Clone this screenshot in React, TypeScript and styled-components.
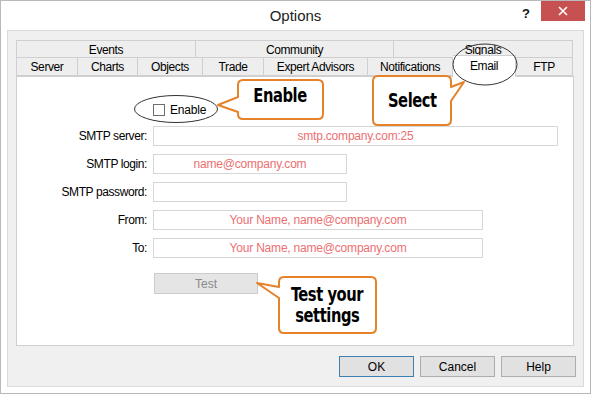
import React from 'react';
import styled, { createGlobalStyle } from 'styled-components';

const GlobalStyle = createGlobalStyle`
    html, body {
        margin: 0;
        padding: 0;
        background: #ffffff;
    }
    body {
        font-family: "Liberation Sans", Arial, sans-serif;
        color: #000;
    }
`;

/* Window frame */
const Window = styled.div`
    position: relative;
    width: 591px;
    height: 394px;
    box-sizing: border-box;
    border: 1px solid #b9b9b9;
    background: #ffffff;
    display: flex;
    flex-direction: column;
    overflow: hidden;
`;

const TitleBar = styled.div`
    height: 29px;
    flex-shrink: 0;
    display: grid;
    grid-template-columns: 1fr auto 1fr;
    align-items: start;
`;

const Title = styled.div`
    grid-column: 2;
    padding-top: 6px;
    font-size: 15px;
    color: #222;
`;

const TitleControls = styled.div`
    grid-column: 3;
    justify-self: end;
    display: flex;
    align-items: flex-start;
    margin-top: -1px;
    margin-right: 5px;
`;

const HelpGlyph = styled.div`
    font-size: 13px;
    font-weight: bold;
    margin-top: 6px;
    margin-right: 11px;
    color: #111;
`;

const CloseButton = styled.div`
    width: 44px;
    height: 21px;
    background: #c75050;
    display: flex;
    align-items: center;
    justify-content: center;
`;

/* Client area */
const Client = styled.div`
    flex: 1;
    margin: 0 6px 6px 6px;
    border: 1px solid #dadada;
    background: #f0f0f0;
    display: flex;
    flex-direction: column;
`;

const TabArea = styled.div`
    padding: 9px 9px 0 8px;
    display: flex;
    flex-direction: column;
`;

const TabRow = styled.div<{ $front?: boolean }>`
    display: flex;
    align-items: flex-end;
    height: 18px;
    position: relative;
    z-index: ${p => (p.$front ? 2 : 1)};
`;

const Tab = styled.div<{ $w: number; $top?: boolean; $active?: boolean }>`
    box-sizing: border-box;
    width: ${p => p.$w}px;
    height: ${p => (p.$active ? 22 : 18)}px;
    margin-bottom: ${p => (p.$active ? -1 : 0)}px;
    border: 1px solid #cfcfcf;
    border-left: none;
    border-top: ${p => (p.$top || p.$active ? '1px solid #cfcfcf' : 'none')};
    border-bottom: ${p => (p.$active ? 'none' : '1px solid #cfcfcf')};
    background: ${p => (p.$active ? '#ffffff' : '#eeeeee')};
    display: flex;
    align-items: ${p => (p.$active ? 'flex-start' : 'center')};
    padding-top: ${p => (p.$active ? 3 : 1)}px;
    justify-content: center;
    font-size: 12px;
    letter-spacing: -0.4px;
    white-space: nowrap;

    &:first-child {
        border-left: 1px solid #cfcfcf;
    }
`;

const Panel = styled.div`
    height: 270px;
    box-sizing: border-box;
    border: 1px solid #cfcfcf;
    background: #ffffff;
    display: flex;
    flex-direction: column;
    padding-top: 26px;
`;

const EnableRow = styled.label`
    display: flex;
    align-items: center;
    gap: 5px;
    margin-left: 136px;
    height: 13px;
    font-size: 12px;
    letter-spacing: -0.2px;
`;

const CheckBox = styled.span`
    box-sizing: border-box;
    width: 12px;
    height: 12px;
    border: 1px solid #6e6e6e;
    background: #fff;
`;

const Form = styled.div`
    display: grid;
    grid-template-columns: 130px 1fr;
    column-gap: 6px;
    row-gap: 8px;
    margin-top: 10px;
    align-items: center;
`;

const FieldLabel = styled.div`
    text-align: right;
    font-size: 12px;
    letter-spacing: -0.4px;
`;

const Field = styled.div<{ $w: number }>`
    box-sizing: border-box;
    width: ${p => p.$w}px;
    height: 20px;
    border: 1px solid #d6d6d6;
    display: flex;
    align-items: center;
    justify-content: center;
    font-size: 12px;
    letter-spacing: -0.2px;
    color: #ec6f72;
`;

const TestButton = styled.div`
    box-sizing: border-box;
    width: 104px;
    height: 21px;
    margin: 15px 0 0 137px;
    background: #e5e5e5;
    border: 1px solid #cccccc;
    color: #8a8a8a;
    font-size: 12px;
    display: flex;
    align-items: center;
    justify-content: center;
`;

/* Bottom buttons */
const Footer = styled.div`
    display: flex;
    justify-content: flex-end;
    gap: 6px;
    padding: 10px 7px 0 0;
`;

const DialogButton = styled.div<{ $default?: boolean }>`
    box-sizing: border-box;
    width: 75px;
    height: 21px;
    background: #e1e1e1;
    border: 1px solid ${p => (p.$default ? '#3c7fb1' : '#adadad')};
    font-size: 12px;
    display: flex;
    align-items: center;
    justify-content: center;
`;

/* Annotations drawn over the dialog */
const Overlay = styled.svg`
    position: absolute;
    left: -1px;
    top: -1px;
    width: 591px;
    height: 394px;
    pointer-events: none;
    z-index: 5;
`;

const Callout = styled.div<{ $x: number; $y: number; $w: number; $h: number }>`
    position: absolute;
    left: ${p => p.$x - 1}px;
    top: ${p => p.$y - 1}px;
    width: ${p => p.$w}px;
    height: ${p => p.$h}px;
    z-index: 6;
    display: flex;
    flex-direction: column;
    align-items: center;
    justify-content: center;
`;

// heavy condensed caption, squeezed a little to look like the Impact face
const CalloutLabel = styled.span`
    display: block;
    transform: scaleX(0.86);
    text-align: center;
    font-family: "DejaVu Sans Condensed", "DejaVu Sans", sans-serif;
    font-weight: bold;
    font-size: 19px;
    line-height: 21px;
    letter-spacing: -0.5px;
    white-space: nowrap;
    color: #000;
`;

const topTabs = [
    { label: 'Events', w: 180 },
    { label: 'Community', w: 198 },
    { label: 'Signals', w: 179 },
];

const bottomTabs = [
    { label: 'Server', w: 62 },
    { label: 'Charts', w: 60 },
    { label: 'Objects', w: 65 },
    { label: 'Trade', w: 61 },
    { label: 'Expert Advisors', w: 104 },
    { label: 'Notifications', w: 85 },
    { label: 'Email', w: 63, active: true },
    { label: 'FTP', w: 57 },
];

const fields = [
    { label: 'SMTP server:', w: 405, value: 'smtp.company.com:25' },
    { label: 'SMTP login:', w: 194, value: 'name@company.com' },
    { label: 'SMTP password:', w: 194, value: '' },
    { label: 'From:', w: 330, value: 'Your Name, name@company.com' },
    { label: 'To:', w: 330, value: 'Your Name, name@company.com' },
];

const ORANGE = '#e5822a';

export default function App() {
    return (
        <>
            <GlobalStyle />
            <Window>
                <TitleBar>
                    <Title>Options</Title>
                    <TitleControls>
                        <HelpGlyph>?</HelpGlyph>
                        <CloseButton>
                            <svg width="10" height="10" viewBox="0 0 10 10">
                                <path d="M1 1 L9 9 M9 1 L1 9" stroke="#fff" strokeWidth="1.6" />
                            </svg>
                        </CloseButton>
                    </TitleControls>
                </TitleBar>

                <Client>
                    <TabArea>
                        <TabRow>
                            {topTabs.map(t => (
                                <Tab key={t.label} $w={t.w} $top>{t.label}</Tab>
                            ))}
                        </TabRow>
                        <TabRow $front>
                            {bottomTabs.map(t => (
                                <Tab key={t.label} $w={t.w} $active={t.active}>{t.label}</Tab>
                            ))}
                        </TabRow>
                        <Panel>
                            <EnableRow>
                                <CheckBox />
                                Enable
                            </EnableRow>
                            <Form>
                                {fields.map(f => (
                                    <React.Fragment key={f.label}>
                                        <FieldLabel>{f.label}</FieldLabel>
                                        <Field $w={f.w}>{f.value}</Field>
                                    </React.Fragment>
                                ))}
                            </Form>
                            <TestButton>Test</TestButton>
                        </Panel>
                    </TabArea>
                    <Footer>
                        <DialogButton $default>OK</DialogButton>
                        <DialogButton>Cancel</DialogButton>
                        <DialogButton>Help</DialogButton>
                    </Footer>
                </Client>

                <Overlay viewBox="0 0 591 394">
                    <ellipse cx="485" cy="64.5" rx="32" ry="20.5" fill="none" stroke="#333" strokeWidth="1" />
                    <ellipse cx="176" cy="109" rx="41.5" ry="13.5" fill="none" stroke="#333" strokeWidth="1" />
                    <path
                        d="M243,80 H318 Q323,80 323,85 V114 Q323,119 318,119 H243 Q238,119 238,114 V112 L218,105 L238,97 V85 Q238,80 243,80 Z"
                        fill="#fff" stroke={ORANGE} strokeWidth="2" strokeLinejoin="round"
                    />
                    <path
                        d="M378,76 H446 Q451,76 451,81 V87 L464,82 L451,101 V120 Q451,125 446,125 H378 Q373,125 373,120 V81 Q373,76 378,76 Z"
                        fill="#fff" stroke={ORANGE} strokeWidth="2" strokeLinejoin="round"
                    />
                    <path
                        d="M284,277 H371 Q376,277 376,282 V328 Q376,333 371,333 H284 Q279,333 279,328 V298 L257,283 L279,287 V282 Q279,277 284,277 Z"
                        fill="#fff" stroke={ORANGE} strokeWidth="2" strokeLinejoin="round"
                    />
                </Overlay>
                <Callout $x={238} $y={80} $w={85} $h={31}>
                    <CalloutLabel>Enable</CalloutLabel>
                </Callout>
                <Callout $x={373} $y={76} $w={78} $h={49}>
                    <CalloutLabel>Select</CalloutLabel>
                </Callout>
                <Callout $x={279} $y={277} $w={97} $h={56}>
                    <CalloutLabel>Test your</CalloutLabel>
                    <CalloutLabel>settings</CalloutLabel>
                </Callout>
            </Window>
        </>
    );
}
